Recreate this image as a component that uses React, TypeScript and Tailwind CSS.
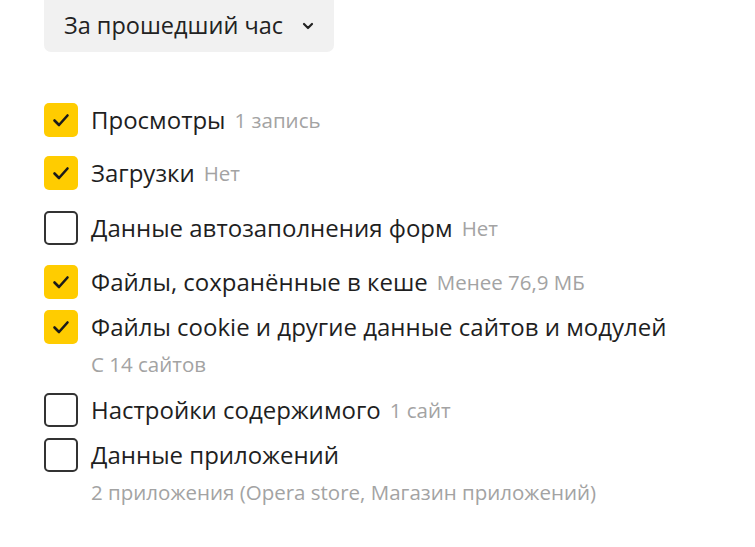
import React from "react";

type Item = {
  label: string;
  note?: string;
  sub?: string;
  checked: boolean;
  mt: string;
};

const items: Item[] = [
  { label: "Просмотры", note: "1 запись", checked: true, mt: "mt-0" },
  { label: "Загрузки", note: "Нет", checked: true, mt: "mt-[19px]" },
  { label: "Данные автозаполнения форм", note: "Нет", checked: false, mt: "mt-[21px]" },
  { label: "Файлы, сохранённые в кеше", note: "Менее 76,9 МБ", checked: true, mt: "mt-[20px]" },
  {
    label: "Файлы cookie и другие данные сайтов и модулей",
    sub: "С 14 сайтов",
    checked: true,
    mt: "mt-[11px]",
  },
  { label: "Настройки содержимого", note: "1 сайт", checked: false, mt: "mt-[17px]" },
  {
    label: "Данные приложений",
    sub: "2 приложения (Opera store, Магазин приложений)",
    checked: false,
    mt: "mt-[11px]",
  },
];

function Box({ checked }: { checked: boolean }) {
  if (checked) {
    return (
      <span className="w-[34px] h-[34px] shrink-0 rounded-[5px] bg-[#ffcc00] flex items-center justify-center">
        <svg width="20" height="20" viewBox="0 0 20 20" fill="none">
          <path d="M3.5 10.5 L8 15 L16.5 5.5" stroke="#1a1a1a" strokeWidth="2.6" strokeLinecap="round" strokeLinejoin="round" />
        </svg>
      </span>
    );
  }
  return <span className="w-[34px] h-[34px] shrink-0 rounded-[5px] border-2 border-[#333333] bg-white" />;
}

export default function App() {
  return (
    <div className="w-[755px] h-[547px] bg-white overflow-hidden font-['Open_Sans',sans-serif] text-[#1f1f1f]">
      <div className="pl-[44px]">
        <button className="w-[290px] h-[52px] rounded-b-[7px] bg-[#f1f1f1] flex items-center pl-[20px] text-[23.5px] leading-none text-[#222]">
          <span>За прошедший час</span>
          <svg className="ml-[19px]" width="12" height="8" viewBox="0 0 12 8" fill="none">
            <path d="M2 2 L6 6 L10 2" stroke="#222" strokeWidth="2.2" strokeLinecap="round" strokeLinejoin="round" />
          </svg>
        </button>

        <ul className="mt-[51px] flex flex-col">
          {items.map((it) => (
            <li key={it.label} className={`${it.mt} flex flex-col`}>
              <div className="flex items-center h-[34px]">
                <Box checked={it.checked} />
                <span className="ml-[13px] text-[24px] leading-[34px] whitespace-nowrap">{it.label}</span>
                {it.note && (
                  <span className="ml-[9px] text-[20.5px] text-[#a3a3a3] whitespace-nowrap">{it.note}</span>
                )}
              </div>
              {it.sub && (
                <div className="ml-[47px] mt-[8px] text-[20.5px] leading-[24px] text-[#a3a3a3] whitespace-nowrap">{it.sub}</div>
              )}
            </li>
          ))}
        </ul>
      </div>
    </div>
  );
}
